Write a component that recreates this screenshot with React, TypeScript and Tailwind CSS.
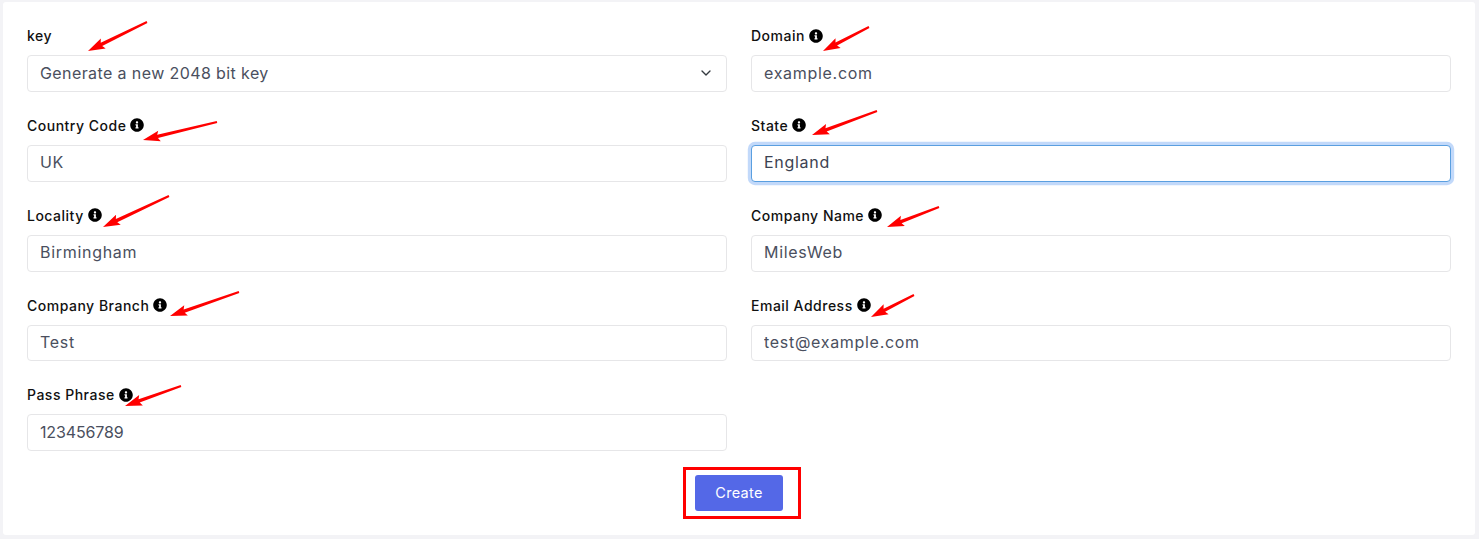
import React from "react";
import { FaInfoCircle } from "react-icons/fa";
import { LuChevronDown } from "react-icons/lu";

// tail x, tail y, tip x, tip y
const arrows = [
  [147, 22, 88, 51],
  [869, 27, 823, 51],
  [217, 122, 143, 140],
  [877, 111, 812, 135],
  [169, 196, 103, 227],
  [939, 207, 887, 227],
  [239, 292, 170, 316],
  [914, 295, 871, 317],
  [181, 386, 125, 406],
];

const arrowPoints = ([x1, y1, x2, y2]: number[]) => {
  const len = Math.hypot(x2 - x1, y2 - y1);
  const ux = (x2 - x1) / len;
  const uy = (y2 - y1) / len;
  const nx = -uy;
  const ny = ux;
  const bx = x2 - ux * 15;
  const by = y2 - uy * 15;
  const pts = [
    [x1 + nx, y1 + ny],
    [bx + nx * 1.7, by + ny * 1.7],
    [bx - ux * 2 + nx * 5.5, by - uy * 2 + ny * 5.5],
    [x2, y2],
    [bx - ux * 2 - nx * 5.5, by - uy * 2 - ny * 5.5],
    [bx - nx * 1.7, by - ny * 1.7],
    [x1 - nx, y1 - ny],
  ];
  return pts.map((p) => p.join(",")).join(" ");
};

const Label = ({ text, info = true }: { text: string; info?: boolean }) => (
  <label className="flex h-[21px] items-center gap-[4px] pb-[2px] text-[14px] font-[450] tracking-[0.5px] text-[#111]">
    {text}
    {info && <FaInfoCircle className="size-[14px] text-black" />}
  </label>
);

const Field = ({
  label,
  value,
  focused = false,
  digits = false,
}: {
  label: string;
  value: string;
  focused?: boolean;
  digits?: boolean;
}) => (
  <div className="flex flex-col gap-[8px]">
    <Label text={label} />
    <input
      readOnly
      defaultValue={value}
      className={`h-[36.8px] w-full rounded-[4px] border bg-white px-3 pb-[2px] text-[16px] outline-none ${
        digits ? "tracking-[-0.15px]" : "tracking-[0.7px]"
      } ${
        focused
          ? "border-[#5a9fe0] text-[#3c4252] shadow-[0_0_0_3.2px_#c2d9fa]"
          : "border-[#e6e6e8] text-[#4a4f5e]"
      }`}
    />
  </div>
);

export default function App() {
  return (
    <div className="relative h-[539px] w-full overflow-hidden bg-[#f3f3f6] pt-[2px] pr-[4px] pb-[4px] pl-[3px] font-['Inter',sans-serif]">
      <div className="flex h-full flex-col rounded-[3px] bg-white px-6 pt-[24.2px]">
        <div className="grid grid-cols-2 gap-x-6 gap-y-[24px]">
          <div className="flex flex-col gap-[8px]">
            <Label text="key" info={false} />
            <div className="relative">
              <select
                defaultValue="new"
                className="h-[36.8px] w-full appearance-none rounded-[4px] border border-[#e6e6e8] bg-white px-3 pb-[2px] text-[16px] tracking-[0.4px] text-[#4a4f5e] outline-none"
              >
                <option value="new">Generate a new 2048 bit key</option>
              </select>
              <LuChevronDown className="pointer-events-none absolute top-[10px] right-[13px] size-[16px] text-[#343a40]" />
            </div>
          </div>
          <Field label="Domain" value="example.com" />
          <Field label="Country Code" value="UK" />
          <Field label="State" value="England" focused />
          <Field label="Locality" value="Birmingham" />
          <Field label="Company Name" value="MilesWeb" />
          <Field label="Company Branch" value="Test" />
          <Field label="Email Address" value="test@example.com" />
          <Field label="Pass Phrase" value="123456789" digits />
        </div>
        <div className="mt-6 flex justify-center">
          <div className="relative">
            <button className="h-[36px] w-[88px] rounded-[3px] bg-[#5468e7] text-[14.5px] font-normal tracking-[0.3px] text-white">
              Create
            </button>
            {/* annotation box, drawn off-centre around the button */}
            <div className="pointer-events-none absolute -top-2 -right-[18px] -bottom-2 -left-3 border-[3px] border-[#f00]" />
          </div>
        </div>
      </div>
      <svg className="pointer-events-none absolute top-0 left-0" width="1479" height="539">
        {arrows.map((a) => (
          <polygon key={a.join("-")} points={arrowPoints(a)} fill="#ff0000" />
        ))}
      </svg>
    </div>
  );
}
